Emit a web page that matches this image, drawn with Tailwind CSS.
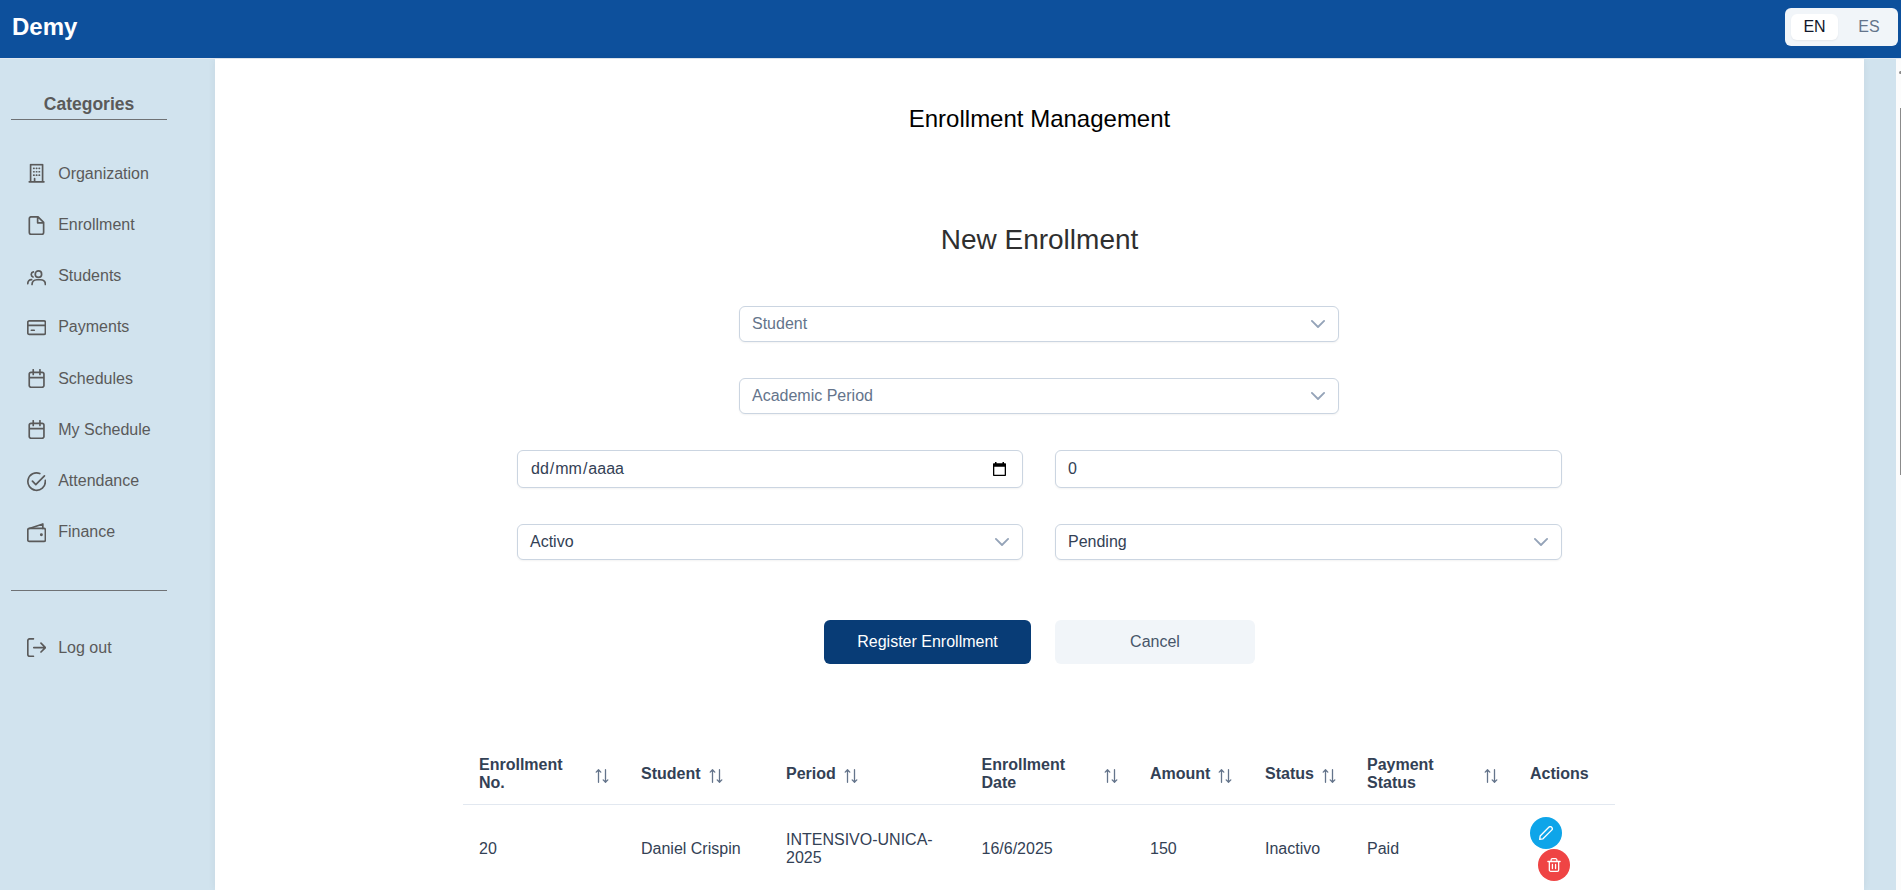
<!DOCTYPE html>
<html lang="en">
<head>
<meta charset="utf-8">
<title>Demy</title>
<script src="https://cdn.jsdelivr.net/npm/@tailwindcss/browser@4"></script>
</head>
<body class="relative flex h-[890px] w-[1901px] flex-col overflow-hidden bg-[#d1e3ee] font-['Liberation_Sans',Arial,sans-serif] text-base">
<svg class="hidden">
  <symbol id="chevron" viewBox="0 0 14 14"><path d="M.9 3.900 7 10l6.100-6.100" fill="none" stroke="currentColor" stroke-width="1.800" stroke-linecap="round" stroke-linejoin="round"/></symbol>
  <symbol id="sort" viewBox="0 0 14 14"><path d="M3.500 13.300V.9M1.200 3.100 3.500.8l2.300 2.300M10.500.7v12.400M8.200 10.900l2.300 2.300 2.300-2.300" fill="none" stroke="currentColor" stroke-width="1.300" stroke-linecap="round" stroke-linejoin="round"/></symbol>
  <symbol id="calendar" viewBox="0 0 24 24"><path d="M5 4.200h14a2.200 2.200 0 0 1 2.200 2.200v14.200a2.200 2.200 0 0 1-2.200 2.200H5a2.200 2.200 0 0 1-2.200-2.200V6.400A2.200 2.200 0 0 1 5 4.200ZM2.800 10.800h18.400M7.800 .9v6M16.200 .9v6"/></symbol>
</svg>

<header class="flex h-[59px] shrink-0 items-center justify-between border-b border-[#e2e8f0] bg-[#0d509c] pr-[3px] pl-3">
  <h1 class="-mt-1 text-2xl font-bold text-white">Demy</h1>
  <div class="-mt-1 flex h-[38px] w-[113px] items-center rounded-md bg-[#f1f5f9] px-1.5 text-[#64748b]">
    <span class="flex h-[26px] w-[47px] items-center justify-center rounded-md bg-white text-[#0f172a] shadow-[0_1px_2px_rgba(0,0,0,0.060)]">EN</span>
    <span class="flex h-[26px] flex-1 items-center justify-center pl-[8px]">ES</span>
  </div>
</header>

<div class="flex min-h-0 flex-1">
  <aside class="w-[215px] shrink-0 pl-[11px] text-[#5a5a5a]">
    <h2 class="mt-[33px] h-[28px] w-[156px] border-b border-[#6f7275] text-center text-[17.500px] leading-[25px] font-bold">Categories</h2>
    <nav class="mt-[28.500px] flex flex-col pl-4 [&_a]:flex [&_a]:h-[51.150px] [&_a]:items-center [&_a]:gap-3 [&_svg]:size-[19.200px] [&_svg]:fill-none [&_svg]:stroke-current [&_svg]:stroke-[2.1] [&_svg]:[stroke-linecap:round] [&_svg]:[stroke-linejoin:round]">
      <a><svg viewBox="0 0 24 24" class="-translate-y-[0.500px]"><path d="M4.500 22.500V1.400h15v21.100M2.800 22.900h18.400M8.400 6h.4M15.200 6h.4M8.400 10.300h.4M15.200 10.300h.4M8.400 14.600h.4M15.200 14.600h.4M11.800 6h.4M11.800 10.300h.4M11.800 14.600h.4M9.500 22.500v-3.700"/></svg>Organization</a>
      <a><svg viewBox="0 0 24 24"><path d="M5.200 1h8.600l7 7v12.700a2.300 2.300 0 0 1-2.300 2.300H5.200a2.300 2.300 0 0 1-2.300-2.300V3.300A2.300 2.300 0 0 1 5.200 1ZM13.300 1.500V8.500h7"/></svg>Enrollment</a>
      <a><svg viewBox="0 0 24 24" class="translate-y-[1px]"><circle cx="14.300" cy="7.700" r="4"/><path d="M6.300 20.500c0-3.500 2.300-5.800 6-5.800h4.500c3.700 0 6.200 2.300 6.200 5.800M8 4.800a3.400 3.400 0 0 0-.5 6.500M1 19.500c0-3 1.500-5 4.800-5"/></svg>Students</a>
      <a><svg viewBox="0 0 24 24"><rect x="1" y="3.500" width="22" height="17" rx="1.800"/><path d="M1 9.300h22M5.500 15.300h3.500"/></svg>Payments</a>
      <a><svg viewBox="0 0 24 24"><use href="#calendar"/></svg>Schedules</a>
      <a><svg viewBox="0 0 24 24"><use href="#calendar"/></svg>My Schedule</a>
      <a><svg viewBox="0 0 24 24" class="translate-y-[1px]"><path d="M22.900 10.500V12A10.900 10.900 0 1 1 16 1.900M6.800 11.500l4.200 4.200L21.800 4.800"/></svg>Attendance</a>
      <a><svg viewBox="0 0 24 24" class="translate-y-[1px]"><rect x="1" y="6.800" width="22" height="16.200" rx="1.800"/><path d="M3 6.800 19.800 1.200v5.600"/><circle cx="18" cy="14.800" r=".8" fill="currentColor"/></svg>Finance</a>
    </nav>
    <div class="mt-[32px] w-[156px] border-t border-[#6f7275]"></div>
    <a class="mt-[47px] flex items-center gap-3 pl-4 leading-5"><svg viewBox="0 0 24 24" class="size-[19.200px] fill-none stroke-current stroke-[2.1] [stroke-linecap:round] [stroke-linejoin:round]"><path d="M8 23H3.500A2.500 2.500 0 0 1 1 20.500v-17A2.500 2.500 0 0 1 3.500 1H8M8.500 12H23M17.500 6.500 23 12l-5.500 5.500"/></svg>Log out</a>
  </aside>

  <main class="flex w-[1649px] shrink-0 flex-col items-center bg-white text-[#334155] shadow-[0_0_8px_rgba(0,0,0,0.060)]">
    <h2 class="mt-[44px] text-2xl text-black">Enrollment Management</h2>
    <h3 class="mt-[87px] text-[28px] leading-[36px] text-[#2f2f2f]">New Enrollment</h3>

    <div class="mt-[48px] mr-px flex w-[600px] flex-col gap-9 text-[#64748b]">
      <div class="flex h-9 items-center justify-between rounded-md border border-[#cbd5e1] bg-white pr-[13px] pl-3 shadow-[0_1px_2px_rgba(18,18,23,0.050)]">Student<svg class="size-3.5 text-[#94a3b8]"><use href="#chevron"/></svg></div>
      <div class="flex h-9 items-center justify-between rounded-md border border-[#cbd5e1] bg-white pr-[13px] pl-3 shadow-[0_1px_2px_rgba(18,18,23,0.050)]">Academic Period<svg class="size-3.5 text-[#94a3b8]"><use href="#chevron"/></svg></div>
    </div>

    <div class="mt-9 grid w-[1045px] grid-cols-[506px_507px] gap-x-8 gap-y-9">
      <div class="flex h-[38px] items-center justify-between rounded-md border border-[#cbd5e1] bg-white pr-[16px] pl-[13px] shadow-[0_1px_2px_rgba(18,18,23,0.050)]">
        <span class="flex gap-px"><span>dd</span><span>/</span><span>mm</span><span>/</span><span>aaaa</span></span>
        <svg class="h-[14px] w-[13px]" viewBox="0 0 13 14"><path fill="#000" d="M2 0h1.500v1.300h6V0H11v1.300h1.300a.7.7 0 0 1 .7.700V13.300a.7.7 0 0 1-.7.700H.7a.7.7 0 0 1-.7-.7V2a.7.7 0 0 1 .7-.7H2ZM1.300 4.800v7.900h10.400V4.800Z" fill-rule="evenodd"/></svg>
      </div>
      <div class="flex h-[38px] items-center rounded-md border border-[#cbd5e1] bg-white px-3 shadow-[0_1px_2px_rgba(18,18,23,0.050)]">0</div>
      <div class="flex h-9 items-center justify-between rounded-md border border-[#cbd5e1] bg-white pr-[13px] pl-3 shadow-[0_1px_2px_rgba(18,18,23,0.050)]">Activo<svg class="size-3.5 text-[#94a3b8]"><use href="#chevron"/></svg></div>
      <div class="flex h-9 items-center justify-between rounded-md border border-[#cbd5e1] bg-white pr-[13px] pl-3 shadow-[0_1px_2px_rgba(18,18,23,0.050)]">Pending<svg class="size-3.5 text-[#94a3b8]"><use href="#chevron"/></svg></div>
    </div>

    <div class="mt-[60px] flex gap-6">
      <button class="h-11 w-[207px] rounded-md bg-[#083c76] text-white">Register Enrollment</button>
      <button class="h-11 w-[200px] rounded-md bg-[#f1f5f9] text-[#475569]">Cancel</button>
    </div>

    <table class="mt-[80px] mr-px w-[1152px] table-fixed border-collapse text-left leading-[18px] [&_td]:px-4 [&_td]:py-3 [&_th]:px-4 [&_th]:py-3 [&_th_div]:flex [&_th_div]:items-center [&_th_div]:gap-2 [&_th_svg]:mt-[3px] [&_th_svg]:size-3.5 [&_th_svg]:shrink-0 [&_th_svg]:text-[#64748b]">
      <colgroup><col class="w-[162px]"><col class="w-[145px]"><col class="w-[195.500px]"><col class="w-[168.500px]"><col class="w-[115px]"><col class="w-[102px]"><col class="w-[163px]"><col></colgroup>
      <thead>
        <tr class="border-b border-[#e2e8f0]">
          <th><div>Enrollment No.<svg class="ml-auto"><use href="#sort"/></svg></div></th>
          <th><div>Student<svg><use href="#sort"/></svg></div></th>
          <th><div>Period<svg><use href="#sort"/></svg></div></th>
          <th><div>Enrollment Date<svg class="ml-auto"><use href="#sort"/></svg></div></th>
          <th><div>Amount<svg><use href="#sort"/></svg></div></th>
          <th><div>Status<svg><use href="#sort"/></svg></div></th>
          <th><div>Payment Status<svg class="ml-auto"><use href="#sort"/></svg></div></th>
          <th>Actions</th>
        </tr>
      </thead>
      <tbody>
        <tr>
          <td>20</td><td>Daniel Crispin</td><td>INTENSIVO-UNICA-2025</td><td>16/6/2025</td><td>150</td><td>Inactivo</td><td>Paid</td>
          <td>
            <button class="flex size-8 items-center justify-center rounded-full bg-[#0ea5e9] text-white"><svg class="size-3.5" viewBox="0 0 24 24" fill="none" stroke="currentColor" stroke-width="2.300" stroke-linejoin="round"><path d="M1.200 22.800l.8-5.500L16.800 2.200a3.300 3.300 0 0 1 4.900 4.900L6.800 22Z"/></svg></button>
            <button class="ml-2 flex size-8 items-center justify-center rounded-full bg-[#ef4444] text-white"><svg class="size-3.5" viewBox="0 0 24 24" fill="none" stroke="currentColor" stroke-width="2.200" stroke-linecap="round" stroke-linejoin="round"><path d="M1.500 6h21M4 6v14.500A2.300 2.300 0 0 0 6.300 22.800h11.400a2.300 2.300 0 0 0 2.300-2.300V6M7 6V3.500A2.300 2.300 0 0 1 9.300 1.200h5.400A2.300 2.300 0 0 1 17 3.500V6M9.300 11v7M14.700 11v7"/></svg></button>
          </td>
        </tr>
      </tbody>
    </table>
  </main>

  <div class="ml-auto h-full w-[5px] bg-[#fcfcfc]"></div>
</div>
<div class="absolute top-[71px] right-0 h-[3px] w-0.5 rounded-l bg-[#8b8b8b]"></div>
<div class="absolute top-[108px] right-0 h-[367px] w-px bg-[#8b8b8b]"></div>
</body>
</html>
